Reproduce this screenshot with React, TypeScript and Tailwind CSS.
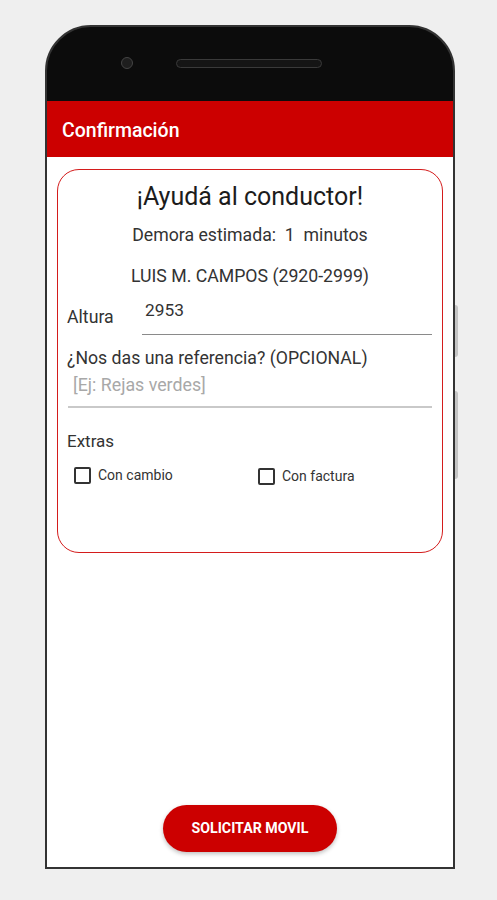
import { useState } from 'react';

export default function App() {
  const [altura, setAltura] = useState('2953');
  const [cambio, setCambio] = useState(false);
  const [factura, setFactura] = useState(false);

  return (
    <div
      className="w-[497px] h-[900px] bg-[#efefef] pt-[25px] pl-[45px] overflow-hidden"
      style={{ fontFamily: 'Roboto, "Noto Sans", sans-serif' }}
    >
      {/* Phone */}
      <div className="relative w-[410px] h-[844px] rounded-t-[46px] bg-[#0c0c0c] border-2 border-[#333] flex flex-col">
        {/* side buttons */}
        <div className="absolute right-[-5px] top-[278px] w-[3px] h-[52px] bg-[#c4c4c4] rounded-r" />
        <div className="absolute right-[-5px] top-[364px] w-[3px] h-[88px] bg-[#c4c4c4] rounded-r" />

        {/* Top bezel */}
        <div className="h-[74px] flex items-center pb-[2px]">
          <div className="ml-[74px] w-[12px] h-[12px] rounded-full bg-[#1e1e1e] border border-[#444]" />
          <div className="ml-[43px] w-[146px] h-[9px] rounded-full bg-[#151515] border border-[#3a3a3a]" />
        </div>

        {/* Screen */}
        <div className="flex-1 bg-white flex flex-col">
          <div className="h-[56px] bg-[#cc0000] flex items-center pl-[15px] pt-[4px]">
            <span className="text-white text-[19.5px] font-medium">Confirmación</span>
          </div>

          {/* Card */}
          <div className="mx-[10px] mt-[12px] h-[384px] border-[1.5px] border-[#d41c1c] rounded-[22px] px-[9px] pt-[12px]">
            <h1 className="text-center text-[25px] leading-[30px] text-[#1c1c1c]">¡Ayudá al conductor!</h1>
            <p className="text-center text-[17.7px] leading-[22px] text-[#333] mt-[12px] whitespace-pre">Demora estimada:  1  minutos</p>
            <p className="text-center text-[17.7px] leading-[22px] text-[#333] mt-[19px]">LUIS M. CAMPOS (2920-2999)</p>

            <div className="flex items-end mt-[12px]">
              <span className="text-[17.7px] leading-[22px] text-[#333] w-[75px] pb-[7px]">Altura</span>
              <div className="flex-1 mr-[1px] border-b-[1.5px] border-[#8a8a8a] pb-[11px]">
                <input
                  value={altura}
                  onChange={(e) => setAltura(e.target.value)}
                  className="w-full pl-[3px] text-[17.3px] leading-[22px] h-[22px] text-[#333] outline-none bg-transparent caret-[#333]"
                />
              </div>
            </div>

            <p className="text-[17.7px] leading-[22px] text-[#333] mt-[12px]">¿Nos das una referencia? (OPCIONAL)</p>
            <div className="border-b-2 border-[#c9c9c9] mx-[1px] mt-[5px] pb-[8px]">
              <input
                placeholder="[Ej: Rejas verdes]"
                className="w-full pl-[5px] text-[17.8px] leading-[22px] h-[22px] text-[#333] placeholder:text-[#a8a8a8] outline-none bg-transparent"
              />
            </div>

            <p className="text-[17px] leading-[22px] text-[#333] mt-[22px]">Extras</p>
            <div className="flex mt-[12px]">
              <label className="flex items-center w-[191px] pl-[7px] cursor-pointer">
                <input type="checkbox" checked={cambio} onChange={() => setCambio(!cambio)} className="sr-only" />
                <span className="w-[17px] h-[17px] border-2 border-[#333] rounded-[2px] flex items-center justify-center">
                  {cambio && <span className="w-[9px] h-[9px] bg-[#cc0000]" />}
                </span>
                <span className="ml-[7px] text-[14px] text-[#333]">Con cambio</span>
              </label>
              <label className="flex items-center mt-[2px] cursor-pointer">
                <input type="checkbox" checked={factura} onChange={() => setFactura(!factura)} className="sr-only" />
                <span className="w-[17px] h-[17px] border-2 border-[#333] rounded-[2px] flex items-center justify-center">
                  {factura && <span className="w-[9px] h-[9px] bg-[#cc0000]" />}
                </span>
                <span className="ml-[7px] text-[14px] text-[#333]">Con factura</span>
              </label>
            </div>
          </div>

          <div className="flex-1" />
          <div className="flex justify-center pb-[15px]">
            <button className="w-[174px] h-[47px] rounded-full bg-[#cc0000] text-white text-[14.2px] font-bold shadow-[0_2px_4px_rgba(0,0,0,0.25)]">
              SOLICITAR MOVIL
            </button>
          </div>
        </div>
      </div>
    </div>
  );
}
